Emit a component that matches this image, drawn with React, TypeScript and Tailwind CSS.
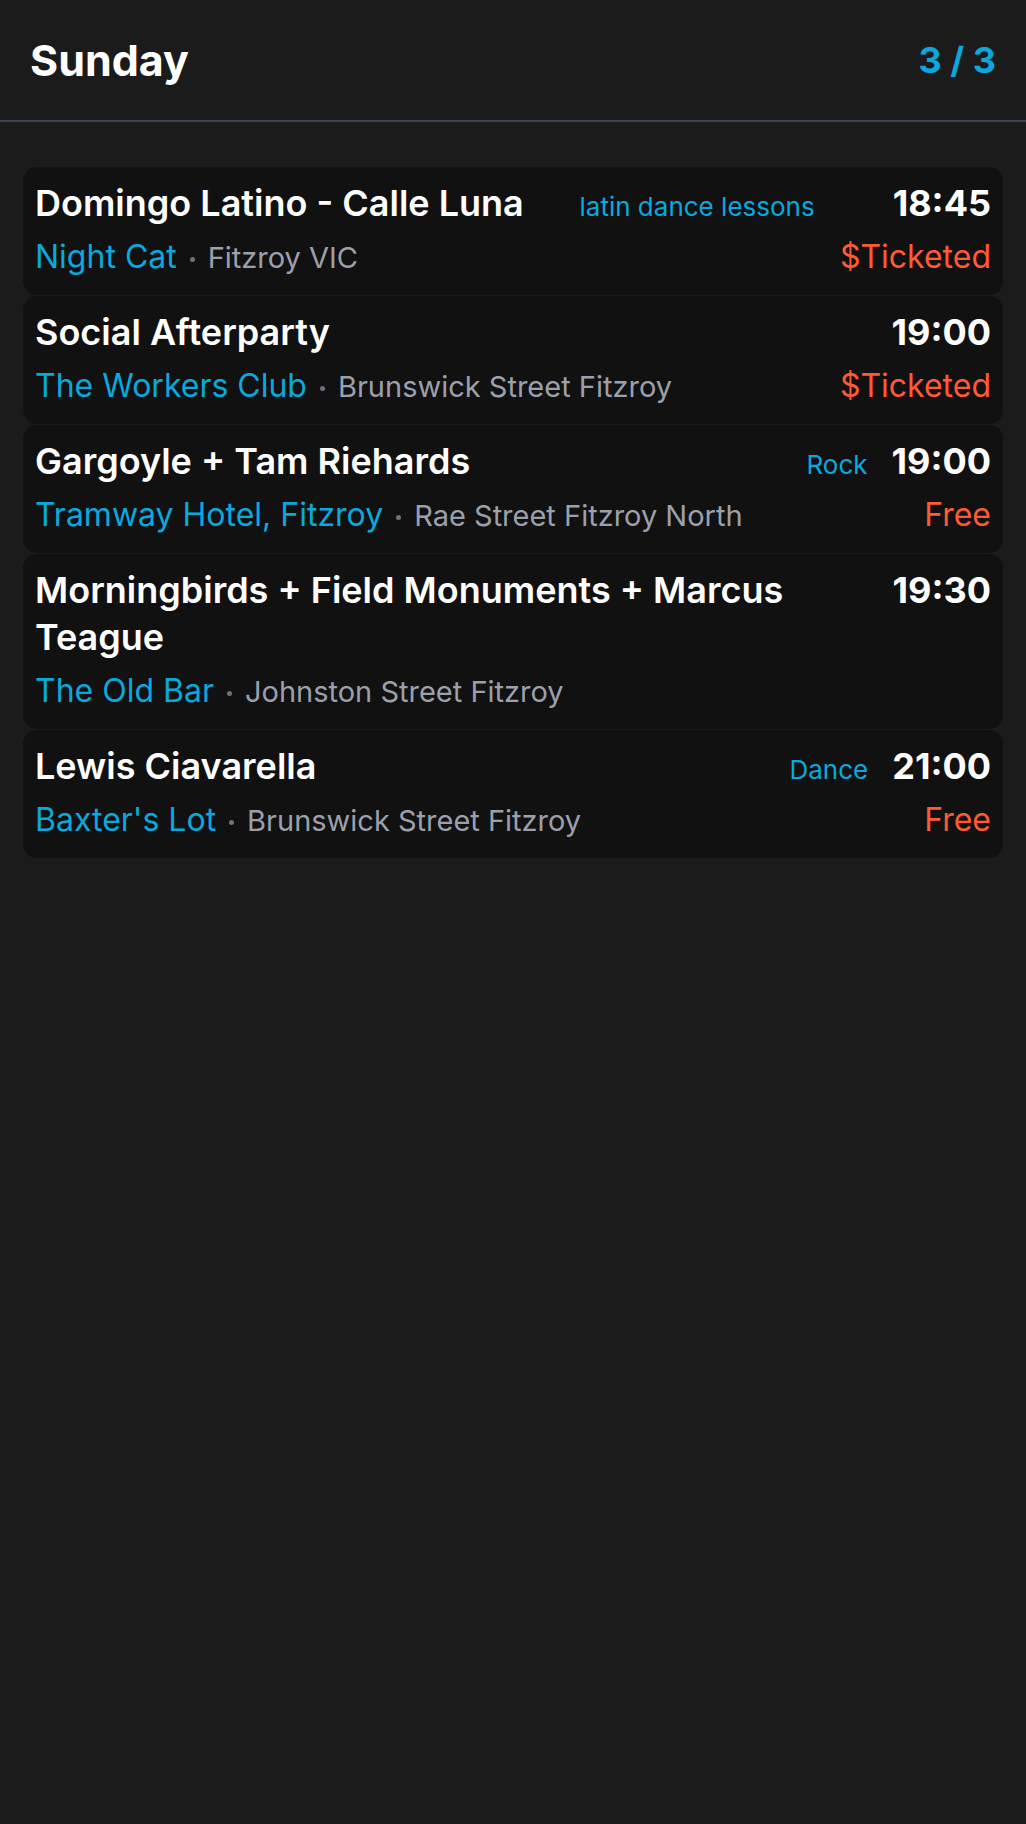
import React from "react";

interface EventItem {
  title: string;
  tag?: string;
  tagGap?: string;
  time: string;
  venue: string;
  address: string;
  price?: string;
}

const events: EventItem[] = [
  {
    title: "Domingo Latino - Calle Luna",
    tag: "latin dance lessons",
    tagGap: "mr-[54px]",
    time: "18:45",
    venue: "Night Cat",
    address: "Fitzroy VIC",
    price: "$Ticketed"
  },
  {
    title: "Social Afterparty",
    time: "19:00",
    venue: "The Workers Club",
    address: "Brunswick Street Fitzroy",
    price: "$Ticketed"
  },
  {
    title: "Gargoyle + Tam Riehards",
    tag: "Rock",
    time: "19:00",
    venue: "Tramway Hotel, Fitzroy",
    address: "Rae Street Fitzroy North",
    price: "Free"
  },
  {
    title: "Morningbirds + Field Monuments + Marcus Teague",
    time: "19:30",
    venue: "The Old Bar",
    address: "Johnston Street Fitzroy"
  },
  {
    title: "Lewis Ciavarella",
    tag: "Dance",
    time: "21:00",
    venue: "Baxter's Lot",
    address: "Brunswick Street Fitzroy",
    price: "Free"
  }
];

const EventCard = ({ item }: { item: EventItem }) => {
  return (
    <div className="rounded-[14px] bg-[#111111] pb-[13px] pl-[12px] pr-[12px] pt-[13px]">
      <div className="flex items-baseline">
        <div className="min-w-0 flex-1 text-[36px] font-semibold leading-[47px] text-white">
          {item.title}
        </div>
        {item.tag && (
          <span className={`ml-4 text-[26px] leading-none text-[#0aa8dc] ${item.tagGap ?? ""}`}>
            {item.tag}
          </span>
        )}
        <span className="ml-[24px] text-[36px] font-bold leading-[47px] text-white">
          {item.time}
        </span>
      </div>
      <div className="mt-[6px] flex items-baseline leading-[48px]">
        <div className="min-w-0 flex-1 text-[32px]">
          <span className="text-[#0aa8dc]">{item.venue}</span>
          <span className="mx-[13px] inline-block h-[5px] w-[5px] rounded-full bg-[#6b7280] align-middle" />
          <span className="text-[29px] text-[#9ca0ab]">{item.address}</span>
        </div>
        {item.price && (
          <span className="ml-4 text-[32px] text-[#ff5a36]">{item.price}</span>
        )}
      </div>
    </div>
  );
};

export default function App() {
  return (
    <div
      className="min-h-screen bg-[#1b1b1b]"
      style={{ fontFamily: "Inter, 'Noto Sans', sans-serif" }}
    >
      {/* header */}
      <div className="flex h-[122px] items-center justify-between border-b-2 border-[#3a4354] px-[30px]">
        <h1 className="text-[43px] font-bold text-white">Sunday</h1>
        <span className="text-[36px] font-bold text-[#0aa8dc]">3 / 3</span>
      </div>

      <div className="flex flex-col gap-[1px] px-[23px] pt-[45px]">
        {events.map((item, i) => (
          <EventCard key={i} item={item} />
        ))}
      </div>
    </div>
  );
}
